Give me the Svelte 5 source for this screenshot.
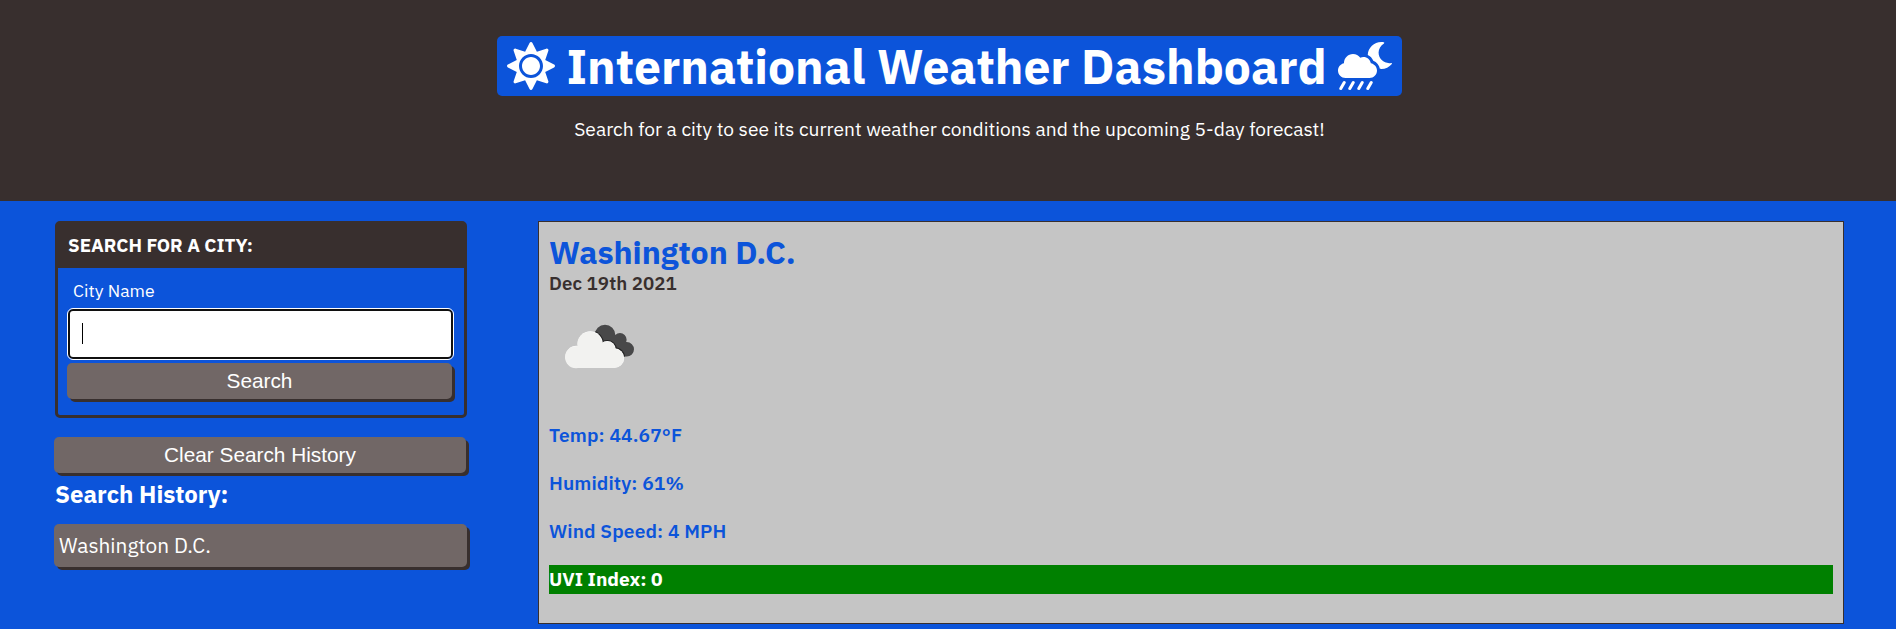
<script>
  const city = 'Washington D.C.';
  const searchHistory = ['Washington D.C.'];
  const readings = ['Temp: 44.67°F', 'Humidity: 61%', 'Wind Speed: 4 MPH'];
</script>

<header class="hero">
  <h1>
    <svg class="sun" viewBox="0 0 512 512" aria-hidden="true"><path d="M256 160c-52.9 0-96 43.1-96 96s43.1 96 96 96 96-43.1 96-96-43.1-96-96-96zm246.4 80.5l-94.7-47.3 33.5-100.4c4.5-13.6-8.4-26.5-21.9-21.9l-100.4 33.5-47.4-94.8c-6.4-12.8-24.6-12.8-31 0l-47.3 94.7L92.7 70.8c-13.6-4.5-26.5 8.4-21.9 21.9l33.5 100.4-94.7 47.4c-12.8 6.4-12.8 24.6 0 31l94.7 47.3-33.5 100.5c-4.5 13.6 8.4 26.5 21.9 21.9l100.4-33.5 47.3 94.7c6.4 12.8 24.6 12.8 31 0l47.3-94.7 100.4 33.5c13.6 4.5 26.5-8.4 21.9-21.9l-33.5-100.4 94.7-47.3c13-6.5 13-24.7.2-31.1zm-155.9 106c-49.9 49.9-131.1 49.9-181 0-49.9-49.9-49.9-131.1 0-181 49.9-49.9 131.1-49.9 181 0 49.9 49.9 49.9 131.1 0 181z" /></svg>
    <span>International Weather Dashboard</span>
    <svg class="rain" viewBox="0 0 576 512" aria-hidden="true">
      <path d="M350.5 225.5c-6.9-37.2-39.3-65.5-78.5-65.5-12.3 0-23.9 3-34.3 8-17.4-24.1-45.6-40-77.7-40-53 0-96 43-96 96 0 .5.2 1.1.2 1.6C27.6 232.9 0 265.2 0 304c0 44.2 35.8 80 80 80h256c44.2 0 80-35.8 80-80 0-39.2-28.2-71.7-65.5-78.5zm217.4-1.7c-70.4 13.3-135-40.3-135-110.8 0-40.6 21.9-78 57.5-98.1 5.5-3.1 4.1-11.4-2.1-12.5C479.6.8 470.7 0 461.8 0c-77.9 0-141.1 61.2-144.4 137.9 26.7 11.9 48.2 33.8 58.9 61.7 37.1 14.3 64 47.4 70.2 86.8 5.1.5 10 1.5 15.2 1.5 44.7 0 85.6-20.2 112.6-53.3 4.2-4.8-.2-12-6.4-10.8z" />
      <path class="drops" d="M66.500 432l-36.600 64M162.500 432l-36.600 64M258.500 432l-36.600 64M354.500 432l-36.600 64" />
    </svg>
  </h1>
  <p>Search for a city to see its current weather conditions and the upcoming 5-day forecast!</p>
</header>

<main>
  <aside>
    <section class="card">
      <h3>SEARCH FOR A CITY:</h3>
      <div class="form">
        <div class="label">City Name</div>
        <div class="field"><span class="caret"></span></div>
        <button>Search</button>
      </div>
    </section>
    <button class="clear">Clear Search History</button>
    <h4>Search History:</h4>
    {#each searchHistory as item}
      <div class="item">{item}</div>
    {/each}
  </aside>

  <section class="panel">
    <h2>{city}</h2>
    <div class="date">Dec 19th 2021</div>
    <svg class="weather" viewBox="0 0 100 100" aria-hidden="true">
      <defs>
        <g id="front-cloud">
          <circle cx="27.500" cy="60.800" r="11" />
          <circle cx="41.300" cy="47.800" r="12.500" />
          <circle cx="58.300" cy="53.500" r="8.500" />
          <circle cx="65.500" cy="62" r="9.700" />
          <path d="M27.500 50h20l16 5 2.500 16.700H27.500z" />
        </g>
        <clipPath id="back-clip">
          <circle cx="56" cy="39" r="10.300" />
          <circle cx="71" cy="43.600" r="6.600" />
          <circle cx="77.700" cy="53.300" r="7.300" />
          <path d="M56 39h15l6 7 .700 14.600H62z" />
        </clipPath>
      </defs>
      <g clip-path="url(#back-clip)">
        <path fill="#484849" d="M40 25h50v50H40z" />
        <use href="#front-cloud" fill="#222" stroke="#222" stroke-width="2.200" />
      </g>
      <use href="#front-cloud" fill="#fff" />
      <use href="#front-cloud" fill="#f2f2f0" transform="translate(-.5 .4)" />
    </svg>
    {#each readings as reading}
      <p>{reading}</p>
    {/each}
    <p class="uvi">UVI Index: 0</p>
  </section>
</main>

<style>
  :global(body) {
    background: #0c54da;
    font-family: "IBM Plex Sans", "Noto Sans", sans-serif;
    color: #fff;
  }
  :global(*) { box-sizing: border-box; }
  h1, h2, h3, h4, p { margin: 0; }

  .hero {
    height: 201px;
    padding-top: 36px;
    background: #382f2e;
    display: flex;
    flex-direction: column;
    align-items: center;
    padding-left: 3px;
  }
  h1 {
    width: 905px;
    height: 60px;
    padding: 0 10px;
    border-radius: 5px;
    background: #0c54da;
    display: flex;
    align-items: center;
    justify-content: space-between;
    font-size: 48px;
    line-height: 60px;
    white-space: nowrap;
  }
  h1 svg { height: 48px; fill: #fff; }
  .sun { width: 48px; }
  .rain { width: 54px; }
  .drops { stroke: #fff; stroke-width: 32; stroke-linecap: round; }
  .hero p {
    margin-top: 18px;
    font-size: 19.200px;
    line-height: 29px;
  }

  main { display: flex; padding: 20px 52px 5px 55px; }
  aside { width: 412px; margin-right: 71px; }

  .card {
    height: 197px;
    border: 3px solid #382f2e;
    border-radius: 5px;
  }
  h3 {
    height: 44px;
    padding: 9px 10px 0;
    background: #382f2e;
    font-size: 18.720px;
    line-height: 24px;
  }
  .form { padding: 11px 12px 0 9px; }
  .label {
    padding-left: 6px;
    font-size: 17.600px;
    line-height: 24px;
    letter-spacing: 0.050px;
  }
  .field {
    height: 50px;
    margin: 6px 0 4px 1px;
    width: 385px;
    padding: 12px;
    border: 2px solid #101010;
    outline: 1px solid #fff;
    border-radius: 5px;
    background: #fff;
  }
  .caret {
    display: block;
    width: 1px;
    height: 21px;
    background: #000;
  }
  button {
    display: block;
    width: 100%;
    height: 36px;
    padding: 0;
    border: 0;
    border-radius: 5px;
    background: #716766;
    box-shadow: 3px 3px 0 #382f2e;
    color: #fff;
    font: 20.800px/36px "Liberation Sans", Arial, sans-serif;
  }
  .clear { margin: 19px 0 0 -1px; }
  h4 {
    margin-top: 6px;
    font-size: 24px;
    line-height: 31px;
  }
  .item {
    height: 43px;
    margin: 14px 0 0 -1px;
    padding-left: 5px;
    border-radius: 5px;
    background: #716766;
    box-shadow: 3px 3px 0 #382f2e;
    font-size: 20.800px;
    line-height: 44px;
  }

  .panel {
    flex: 1;
    height: 403px;
    padding: 11px 10px 0;
    border: 1px solid #382f2e;
    background: #c5c5c5;
    color: #0c54da;
    font-weight: 600;
  }
  h2 {
    font-size: 32px;
    font-weight: 700;
    line-height: 38px;
  }
  .date {
    margin-top: 1px;
    color: #382f2e;
    font-size: 18.720px;
    line-height: 22px;
    letter-spacing: 0.060px;
  }
  .weather {
    display: block;
    width: 100px;
    height: 100px;
    margin: 2px 0 25px;
  }
  .panel p {
    margin-bottom: 19.200px;
    font-size: 19.200px;
    line-height: 28.800px;
    letter-spacing: 0.110px;
  }
  .panel .uvi {
    background: #008000;
    color: #fff;
    font-weight: 700;
    letter-spacing: 0;
  }
</style>
